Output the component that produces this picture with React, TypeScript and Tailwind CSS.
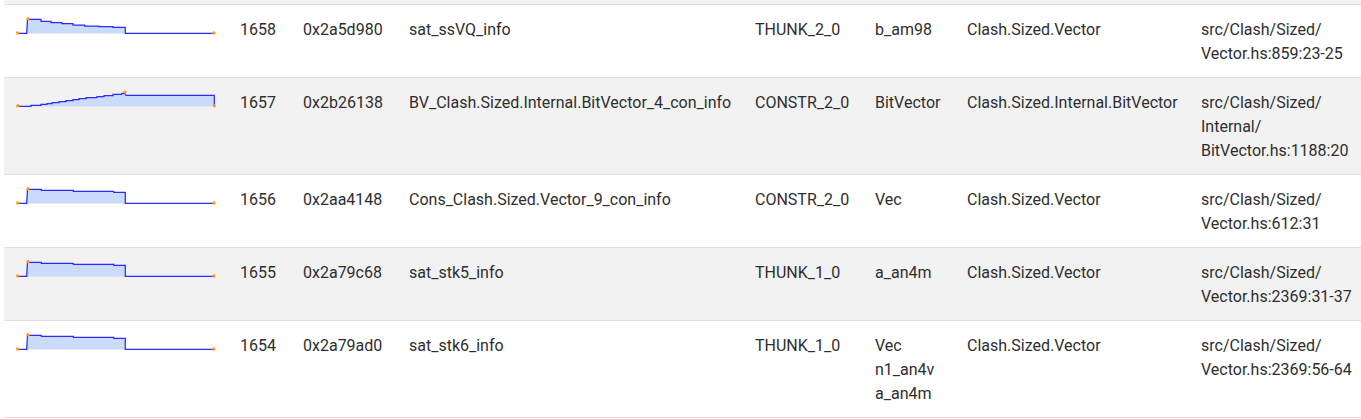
import React from "react";

type Row = {
  id: string;
  addr: string;
  label: string;
  closure: string;
  ty: string[];
  mod: string;
  src: string[];
  line: string;
  fill: string;
  dots: [number, number][];
  bg: string;
};

const shapeA =
  "M1.7,16.3 H10.7 L11.5,2.3 H25.3 V3.3 H57.3 V4.3 H97.7 V5.3 H109.3 V16.3 H198";
const fillA =
  "M10.7,16.6 L11.5,2.3 H25.3 V3.3 H57.3 V4.3 H97.7 V5.3 H109.3 V16.6 Z";
const dotsA: [number, number][] = [
  [1.7, 16],
  [12, 1.8],
  [198, 16],
];

const rows: Row[] = [
  {
    id: "1658",
    addr: "0x2a5d980",
    label: "sat_ssVQ_info",
    closure: "THUNK_2_0",
    ty: ["b_am98"],
    mod: "Clash.Sized.Vector",
    src: ["src/Clash/Sized/", "Vector.hs:859:23-25"],
    line:
      "M1.7,16.3 H10.7 L11.5,2.3 H25 V4.3 H35 V5.7 H46 V6.7 H57 V8 H68.7 V9 H83 V9.7 H97 V10.3 H109.3 V16.3 H198",
    fill:
      "M10.7,16.6 L11.5,2.3 H25 V4.3 H35 V5.7 H46 V6.7 H57 V8 H68.7 V9 H83 V9.7 H97 V10.3 H109.3 V16.6 Z",
    dots: dotsA,
    bg: "bg-white",
  },
  {
    id: "1657",
    addr: "0x2b26138",
    label: "BV_Clash.Sized.Internal.BitVector_4_con_info",
    closure: "CONSTR_2_0",
    ty: ["BitVector"],
    mod: "Clash.Sized.Internal.BitVector",
    src: ["src/Clash/Sized/", "Internal/", "BitVector.hs:1188:20"],
    line:
      "M1.7,16.3 H15 V15.3 H25 V14.3 H31 V13.7 H36 V12.7 H43 V11.7 H50 V10.7 H57 V9.7 H63 V8.7 H70 V7.7 H81 V6.7 H88 V5.7 H97 V4.3 H105.7 V3.3 H108.7 L110,5.3 H198.3 V16",
    fill:
      "M1.7,16.6 L1.7,16.3 H15 V15.3 H25 V14.3 H31 V13.7 H36 V12.7 H43 V11.7 H50 V10.7 H57 V9.7 H63 V8.7 H70 V7.7 H81 V6.7 H88 V5.7 H97 V4.3 H105.7 V3.3 H108.7 L110,5.3 H198.3 V16.6 Z",
    dots: [
      [1.7, 15.8],
      [109, 2.1],
      [198.3, 15.8],
    ],
    bg: "bg-[#f2f2f2]",
  },
  {
    id: "1656",
    addr: "0x2aa4148",
    label: "Cons_Clash.Sized.Vector_9_con_info",
    closure: "CONSTR_2_0",
    ty: ["Vec"],
    mod: "Clash.Sized.Vector",
    src: ["src/Clash/Sized/", "Vector.hs:612:31"],
    line: shapeA,
    fill: fillA,
    dots: dotsA,
    bg: "bg-white",
  },
  {
    id: "1655",
    addr: "0x2a79c68",
    label: "sat_stk5_info",
    closure: "THUNK_1_0",
    ty: ["a_an4m"],
    mod: "Clash.Sized.Vector",
    src: ["src/Clash/Sized/", "Vector.hs:2369:31-37"],
    line: shapeA,
    fill: fillA,
    dots: dotsA,
    bg: "bg-[#f2f2f2]",
  },
  {
    id: "1654",
    addr: "0x2a79ad0",
    label: "sat_stk6_info",
    closure: "THUNK_1_0",
    ty: ["Vec", "n1_an4v", "a_an4m"],
    mod: "Clash.Sized.Vector",
    src: ["src/Clash/Sized/", "Vector.hs:2369:56-64"],
    line: shapeA,
    fill: fillA,
    dots: dotsA,
    bg: "bg-white",
  },
];

function Spark({ r }: { r: Row }) {
  return (
    <svg width="200" height="48" viewBox="0 0 200 48" className="block">
      <path d={r.fill} fill="#cbdbfb" stroke="none" />
      <path d={r.line} fill="none" stroke="#2b2bff" strokeWidth="1.25" />
      {r.dots.map(([x, y], i) => (
        <circle key={i} cx={x} cy={y} r="1.7" fill="#ff9a1f" />
      ))}
    </svg>
  );
}

function Lines({ items }: { items: string[] }) {
  return (
    <>
      {items.map((t, i) => (
        <div key={i} className="whitespace-nowrap">
          {t}
        </div>
      ))}
    </>
  );
}

export default function App() {
  const td = "px-3 pt-[13px] pb-[11px] align-top whitespace-nowrap";
  return (
    <div
      className="w-[1361px] h-[419px] overflow-hidden bg-white text-[16px] leading-[24px] text-[#2e2e2e]"
      style={{ fontFamily: "Roboto, 'Liberation Sans', sans-serif" }}
    >
      <div className="ml-1 w-[1357px]">
        <div className="h-[5px] bg-[#f2f2f2] border-b border-[#e0e0e4]" />
        <table className="table-fixed border-collapse w-[1357px]">
          <colgroup>
            <col className="w-[224px]" />
            <col className="w-[63px]" />
            <col className="w-[106px]" />
            <col className="w-[346px]" />
            <col className="w-[120px]" />
            <col className="w-[92px]" />
            <col className="w-[234px]" />
            <col className="w-[172px]" />
          </colgroup>
          <tbody>
            {rows.map((r) => (
              <tr key={r.id} className={`${r.bg} border-b border-[#e0e0e4]`}>
                <td className="pl-3 pr-2 py-3 align-top">
                  <Spark r={r} />
                </td>
                <td className={td}>{r.id}</td>
                <td className={td}>{r.addr}</td>
                <td className={td}>{r.label}</td>
                <td className={td}>{r.closure}</td>
                <td className={td}>
                  <Lines items={r.ty} />
                </td>
                <td className={td}>{r.mod}</td>
                <td className={td}>
                  <Lines items={r.src} />
                </td>
              </tr>
            ))}
          </tbody>
        </table>
      </div>
    </div>
  );
}
